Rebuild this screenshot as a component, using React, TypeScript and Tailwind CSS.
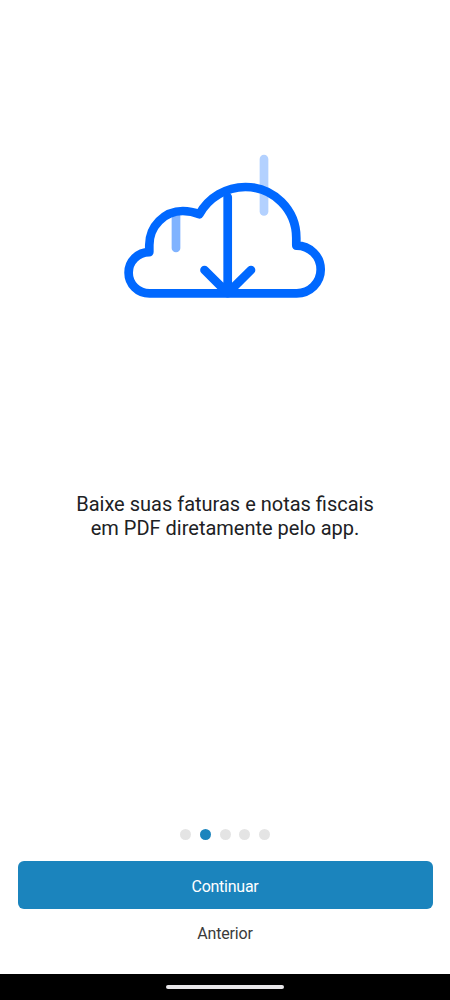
const STEPS = 5;

function CloudDownload() {
  return (
    <svg width="210" height="160" viewBox="120 145 210 160" fill="none" strokeWidth="8.7" strokeLinecap="round" strokeLinejoin="round">
      <path d="M176 216V248" stroke="#80b3ff" />
      <path d="M264 159V211.5" stroke="#b3d1ff" />
      <g stroke="#0068ff">
        <path d="M149.5 293.4A20.9 20.7 0 0 1 128.6 272.7A20.7 20.6 0 0 1 149.3 252.1V245A33.5 34 0 0 1 182.8 211A44.7 44.7 0 0 1 199.4 214.2A52.5 52.5 0 0 1 245.5 187A50.8 51 0 0 1 296.3 238V245.6A24.1 24 0 0 1 320.7 269.6A24 23.8 0 0 1 296.7 293.4Z" />
        <path d="M227.7 197V293.2M204.5 270L227.7 293.2L251 270" />
      </g>
    </svg>
  );
}

function StepDots({ current }: { current: number }) {
  return (
    <div className="flex justify-center gap-[8.7px]">
      {Array.from({ length: STEPS }, (_, i) => (
        <span
          key={i}
          className={`size-[11px] rounded-full ${i === current ? 'bg-[#1b84bd]' : 'bg-[#e4e4e4]'}`}
        />
      ))}
    </div>
  );
}

export default function App() {
  return (
    <div className="flex h-[1000px] w-[450px] flex-col bg-white font-['Roboto',sans-serif]">
      <main className="flex flex-1 flex-col items-center pt-[145px]">
        <div className="flex h-[347px] w-[210px] items-start">
          <CloudDownload />
        </div>
        <p className="text-center text-[20px] leading-[24px] text-[#202124]">
          Baixe suas faturas e notas fiscais
          <br />
          em PDF diretamente pelo app.
        </p>
      </main>

      <footer className="px-[17.5px]">
        <StepDots current={1} />
        <button className="mt-[21px] block h-[48px] w-full rounded-[6px] bg-[#1b84bd] pt-[3px] text-[16px] tracking-[-0.25px] text-white">
          Continuar
        </button>
        <button className="block h-[64.5px] w-full pb-[14px] text-[16px] tracking-[-0.2px] text-[#3a3a3a]">
          Anterior
        </button>
      </footer>

      <div className="flex h-[26.5px] items-center justify-center bg-black">
        <div className="h-[4.5px] w-[118px] rounded-full bg-[#e8e6e9]" />
      </div>
    </div>
  );
}
